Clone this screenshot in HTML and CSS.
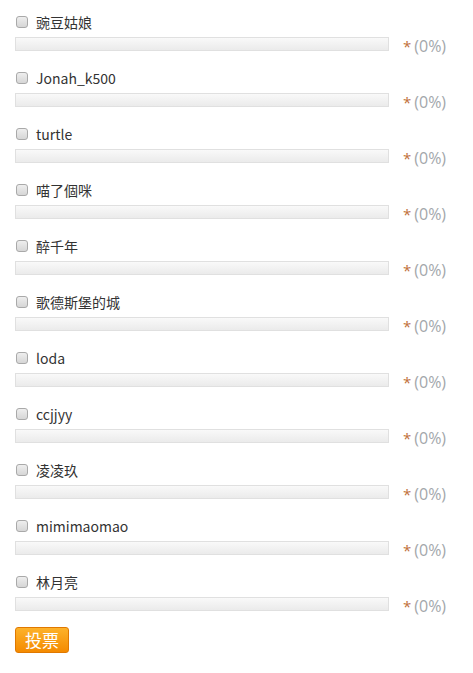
FILE: index.html
```html
<!DOCTYPE html>
<html>
<head>
<meta charset="utf-8">
<link rel="stylesheet" href="styles.css">
</head>
<body>
<form class="poll">
  <div class="opt"><label class="lab"><input type="checkbox" class="cb"><span>豌豆姑娘</span></label><div class="row"><div class="bar"></div><span class="star">*</span><span class="pct">(0%)</span></div></div>
  <div class="opt"><label class="lab"><input type="checkbox" class="cb"><span>Jonah_k500</span></label><div class="row"><div class="bar"></div><span class="star">*</span><span class="pct">(0%)</span></div></div>
  <div class="opt"><label class="lab"><input type="checkbox" class="cb"><span>turtle</span></label><div class="row"><div class="bar"></div><span class="star">*</span><span class="pct">(0%)</span></div></div>
  <div class="opt"><label class="lab"><input type="checkbox" class="cb"><span>喵了個咪</span></label><div class="row"><div class="bar"></div><span class="star">*</span><span class="pct">(0%)</span></div></div>
  <div class="opt"><label class="lab"><input type="checkbox" class="cb"><span>醉千年</span></label><div class="row"><div class="bar"></div><span class="star">*</span><span class="pct">(0%)</span></div></div>
  <div class="opt"><label class="lab"><input type="checkbox" class="cb"><span>歌德斯堡的城</span></label><div class="row"><div class="bar"></div><span class="star">*</span><span class="pct">(0%)</span></div></div>
  <div class="opt"><label class="lab"><input type="checkbox" class="cb"><span>loda</span></label><div class="row"><div class="bar"></div><span class="star">*</span><span class="pct">(0%)</span></div></div>
  <div class="opt"><label class="lab"><input type="checkbox" class="cb"><span>ccjjyy</span></label><div class="row"><div class="bar"></div><span class="star">*</span><span class="pct">(0%)</span></div></div>
  <div class="opt"><label class="lab"><input type="checkbox" class="cb"><span>凌凌玖</span></label><div class="row"><div class="bar"></div><span class="star">*</span><span class="pct">(0%)</span></div></div>
  <div class="opt"><label class="lab"><input type="checkbox" class="cb"><span>mimimaomao</span></label><div class="row"><div class="bar"></div><span class="star">*</span><span class="pct">(0%)</span></div></div>
  <div class="opt"><label class="lab"><input type="checkbox" class="cb"><span>林月亮</span></label><div class="row"><div class="bar"></div><span class="star">*</span><span class="pct">(0%)</span></div></div>
  <div class="actions"><button type="button" class="vote">投票</button></div>
</form>
</body>
</html>
```
FILE: styles.css
```css
html, body { margin: 0; padding: 0; background: #fff; }
body { font-family: "Open Sans", "Noto Sans CJK SC", sans-serif; font-size: 14px; color: #333; }
.poll { padding: 11px 0 0 15px; width: 440px; }
.opt { height: 56px; }
.lab { display: flex; align-items: center; height: 22px; gap: 8px; }
.cb {
  appearance: none; -webkit-appearance: none; margin: 0 0 0 1px;
  width: 12px; height: 12px; border: 1px solid #a9a9a9; border-radius: 3px;
  background: linear-gradient(#eeeeee, #d6d6d6); box-sizing: border-box;
}
.lab span { font-size: 14px; color: #333; line-height: 22px; font-family: "Noto Sans CJK SC", "Open Sans", sans-serif; }
.row { display: flex; align-items: flex-start; margin-top: 4px; height: 19px; }
.bar {
  width: 374px; height: 14px; box-sizing: border-box;
  border: 1px solid #e0e0e0; background: linear-gradient(#f9f9f9, #ebebeb);
}
.star { color: #c0703a; margin-left: 14px; font-size: 15px; line-height: 18px; }
.pct { color: #a3a7ab; margin-left: 3px; font-size: 16px; line-height: 18px; font-family: "Open Sans", sans-serif; }
.actions { margin-top: 0; }
.vote {
  display: block;
  width: 54px; height: 26px; border: 1px solid #e07800; border-radius: 3px;
  background: linear-gradient(#fdb22a, #f48a00); color: #fff;
  font-family: "Noto Sans CJK SC", sans-serif; font-size: 17px; line-height: 22px; padding: 0; letter-spacing: 0;
}
```
